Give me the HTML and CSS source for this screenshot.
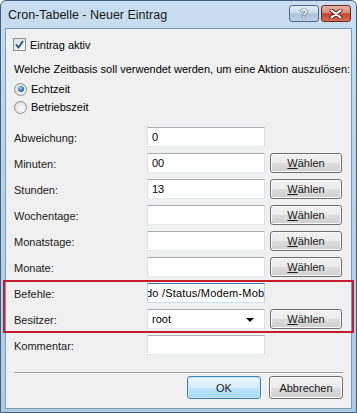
FILE: index.html
```html
<!DOCTYPE html>
<html lang="de">
<head>
  <meta charset="UTF-8">
  <title>Cron-Tabelle - Neuer Eintrag</title>
  <link rel="stylesheet" href="styles.css">
</head>
<body>
  <div class="window">
    <!-- Title bar -->
    <div class="titlebar">
      <span class="title">Cron-Tabelle - Neuer Eintrag</span>
      <div class="caption-buttons">
        <div class="cap-btn help">?</div>
        <div class="cap-btn close">
          <svg width="14" height="10" viewBox="0 0 14 10">
            <path d="M2.5 1.5 L11.5 8.5 M11.5 1.5 L2.5 8.5" stroke="#5a2020" stroke-width="4" stroke-linecap="round"/>
            <path d="M2.5 1.5 L11.5 8.5 M11.5 1.5 L2.5 8.5" stroke="#fff" stroke-width="2.2" stroke-linecap="round"/>
          </svg>
        </div>
      </div>
    </div>

    <!-- Client area -->
    <div class="client">
      <label class="check-row">
        <span class="checkbox">
          <svg width="9" height="9" viewBox="0 0 9 9"><path d="M1 4.5 L3.5 7.5 L8 1" fill="none" stroke="#2a4e9a" stroke-width="1.8"/></svg>
        </span>
        Eintrag aktiv
      </label>

      <p class="question">Welche Zeitbasis soll verwendet werden, um eine Aktion auszulösen:</p>
      <label class="radio-row first"><span class="radio checked"></span>Echtzeit</label>
      <label class="radio-row"><span class="radio"></span>Betriebszeit</label>

      <div class="form">
        <div class="row">
          <span class="label">Abweichung:</span>
          <div class="field">0</div>
        </div>
        <div class="row">
          <span class="label">Minuten:</span>
          <div class="field">00</div>
          <button class="btn"><u>W</u>ählen</button>
        </div>
        <div class="row">
          <span class="label">Stunden:</span>
          <div class="field">13</div>
          <button class="btn"><u>W</u>ählen</button>
        </div>
        <div class="row">
          <span class="label">Wochentage:</span>
          <div class="field"></div>
          <button class="btn"><u>W</u>ählen</button>
        </div>
        <div class="row">
          <span class="label">Monatstage:</span>
          <div class="field"></div>
          <button class="btn"><u>W</u>ählen</button>
        </div>
        <div class="row">
          <span class="label">Monate:</span>
          <div class="field"></div>
          <button class="btn"><u>W</u>ählen</button>
        </div>

        <div class="highlight">
          <div class="row">
            <span class="label">Befehle:</span>
            <div class="field focused"><span class="scrolled">do /Status/Modem-Mob</span></div>
          </div>
          <div class="row">
            <span class="label">Besitzer:</span>
            <div class="field select">
              <span>root</span>
              <span class="arrow"></span>
            </div>
            <button class="btn"><u>W</u>ählen</button>
          </div>
        </div>

        <div class="row">
          <span class="label">Kommentar:</span>
          <div class="field"></div>
        </div>
      </div>

      <hr class="separator">

      <div class="footer">
        <button class="btn default">OK</button>
        <button class="btn">Abbrechen</button>
      </div>
    </div>
  </div>
</body>
</html>
```

FILE: styles.css
```css
body {
  margin: 0;
  font-family: "Liberation Sans", Arial, sans-serif;
  font-size: 11px;
  color: #000;
  background: #fff;
}

/* Window frame */
.window {
  width: 357px;
  height: 413px;
  box-sizing: border-box;
  border: 1px solid #3f5f7e;
  border-radius: 6px 6px 0 0;
  background: linear-gradient(to bottom, #c9def0 0%, #bcd5ec 30%, #aecbe5 100%);
  padding: 0 4px 3px 4px;
  display: flex;
  flex-direction: column;
}
.titlebar {
  height: 27px;
  display: flex;
  justify-content: space-between;
  flex-shrink: 0;
}
.title {
  font-size: 12.5px;
  color: #1a1a1a;
  padding: 7px 0 0 3px;
}
.caption-buttons {
  display: flex;
  gap: 2px;
  margin-top: 4px;
  margin-right: 1px;
}
.cap-btn {
  height: 15px;
  border: 1px solid #4d6884;
  border-radius: 3px;
  display: flex;
  align-items: center;
  justify-content: center;
}
.cap-btn.help {
  width: 28px;
  background: linear-gradient(to bottom, #e3edf6 0%, #c7d8e8 48%, #a9c0d6 52%, #bfd3e6 100%);
  color: #fff;
  font-weight: bold;
  font-size: 13px;
  text-shadow: 0 0 1px #2e4660, 0 0 1px #2e4660, 0 0 1px #2e4660;
}
.cap-btn.close {
  width: 28px;
  border-color: #6a2b2b;
  background: linear-gradient(to bottom, #e9b0a4 0%, #d98a79 45%, #c4452f 52%, #d86c55 100%);
}

.client {
  flex: 1;
  background: #f0f0f0;
  border: 1px solid #7f9ab5;
  padding: 7px 8px 0 8px;
}

/* Checkbox and radios */
.check-row, .radio-row {
  display: flex;
  align-items: center;
  gap: 4px;
  height: 17px;
}
.check-row {
  margin-left: -1px;
}
.checkbox {
  width: 11px;
  height: 11px;
  border: 1px solid #8e8f8f;
  background: linear-gradient(135deg, #dcdcdc, #fbfbfb);
  display: flex;
  align-items: center;
  justify-content: center;
}
.question {
  margin: 8px 0 0 0;
  line-height: 16px;
  white-space: nowrap;
}
.radio-row {
  height: 18px;
}
.radio-row.first {
  margin-top: 3px;
}
.radio {
  width: 11px;
  height: 11px;
  border: 1px solid #8e8f8f;
  border-radius: 50%;
  background: radial-gradient(circle at 60% 60%, #fdfdfd, #d4d4d4);
  position: relative;
}
.radio.checked::after {
  content: "";
  position: absolute;
  left: 2.5px;
  top: 2.5px;
  width: 6px;
  height: 6px;
  border-radius: 50%;
  background: radial-gradient(circle at 40% 35%, #9fd0f5, #1f6fb5 60%, #0d3f78);
}

/* Form rows */
.form {
  margin-top: 11px;
  display: flex;
  flex-direction: column;
  gap: 6px;
}
.row {
  display: grid;
  grid-template-columns: 128px 118px 72px;
  column-gap: 5px;
  align-items: center;
  height: 20px;
}
.label {
  padding-top: 1px;
  color: #1a1a1a;
}
.field {
  height: 20px;
  box-sizing: border-box;
  background: #fff;
  border: 1px solid #abadb3;
  border-left-color: #e2e3ea;
  border-right-color: #dbdfe6;
  border-bottom-color: #e3e9ef;
  padding: 3px 4px 0 4px;
  overflow: hidden;
  white-space: nowrap;
}
.field.focused {
  border-color: #3d7bad;
  border-left-color: #b5cfe7;
  border-right-color: #b7d5ee;
  border-bottom-color: #c7e2f1;
  padding-left: 0;
}
.scrolled {
  display: inline-block;
  margin-left: -3px;
  border-left: 1px solid #000;
  line-height: 13px;
  letter-spacing: 0.2px;
}
.field.select {
  display: flex;
  justify-content: space-between;
  align-items: center;
  padding-top: 0;
  padding-right: 10px;
}
.arrow {
  width: 0;
  height: 0;
  border-left: 4px solid transparent;
  border-right: 4px solid transparent;
  border-top: 4px solid #000;
  margin-top: 2px;
}

/* Red annotation frame around Befehle/Besitzer */
.highlight {
  margin: -3px -11px -4px -11px;
  padding: 1px 9px 2px 9px;
  border: 2px solid #c41e2a;
  display: flex;
  flex-direction: column;
  gap: 6px;
}

/* Buttons */
.btn {
  font-family: inherit;
  font-size: 11px;
  height: 20px;
  padding: 0;
  border: 1px solid #707070;
  border-radius: 3px;
  background: linear-gradient(to bottom, #f2f2f2 0%, #ebebeb 50%, #dddddd 51%, #cfcfcf 100%);
  box-shadow: inset 0 0 0 1px #fbfbfb;
  color: #1a1a1a;
}
.btn u {
  text-underline-offset: 1px;
}

.separator {
  margin: 17px 0 0 0;
  border: none;
  border-top: 1px solid #a0a0a0;
  border-bottom: 1px solid #fff;
  height: 0;
}

.footer {
  display: flex;
  justify-content: flex-end;
  gap: 8px;
  margin-top: 2px;
}
.footer .btn {
  width: 74px;
  height: 23px;
}
.footer .btn.default {
  border-color: #3c7fb1;
  background: linear-gradient(to bottom, #eaf6fd 0%, #d9f0fc 50%, #bee6fd 51%, #a7d9f5 100%);
  box-shadow: inset 0 0 0 1px #cbe9fa;
}
```
